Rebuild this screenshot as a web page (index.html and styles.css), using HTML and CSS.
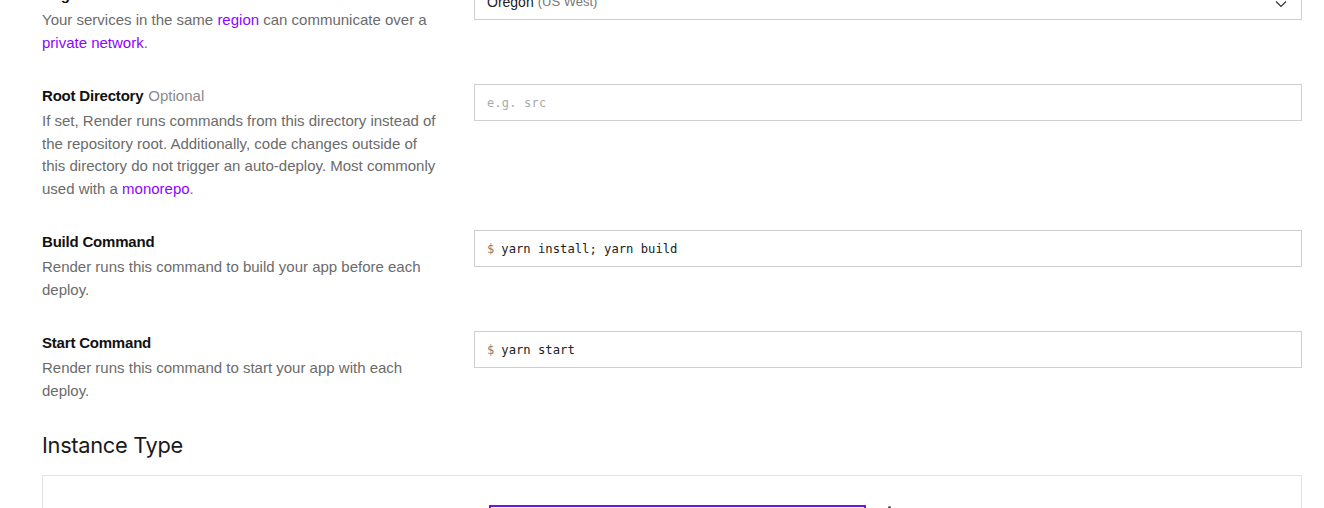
FILE: index.html
```html
<!DOCTYPE html>
<html lang="en">
<head>
<meta charset="utf-8">
<title>New Web Service</title>
<link rel="stylesheet" href="styles.css">
</head>
<body>
<main class="page">
  <section class="form">
    <div class="row">
      <div class="info">
        <div class="label">Region</div>
        <p class="desc">Your services in the same <a href="#">region</a> can communicate over a <a href="#">private network</a>.</p>
      </div>
      <div class="field">
        <div class="select">
          <span class="sel-main">Oregon</span><span class="sel-sub">(US West)</span>
          <svg class="chev" width="12" height="8" viewBox="0 0 12 8"><path d="M1 1.5 L6 6.5 L11 1.5" fill="none" stroke="#333" stroke-width="1.2"/></svg>
        </div>
      </div>
    </div>

    <div class="row">
      <div class="info">
        <div class="label">Root Directory <span class="opt">Optional</span></div>
        <p class="desc">If set, Render runs commands from this directory instead of the repository root. Additionally, code changes outside of this directory do not trigger an auto-deploy. Most commonly used with a <a href="#">monorepo</a>.</p>
      </div>
      <div class="field">
        <div class="input"><span class="ph">e.g. src</span></div>
      </div>
    </div>

    <div class="row">
      <div class="info">
        <div class="label">Build Command</div>
        <p class="desc">Render runs this command to build your app before each deploy.</p>
      </div>
      <div class="field">
        <div class="input"><span class="dollar">$</span><span class="cmd">yarn install; yarn build</span></div>
      </div>
    </div>

    <div class="row">
      <div class="info">
        <div class="label">Start Command</div>
        <p class="desc">Render runs this command to start your app with each deploy.</p>
      </div>
      <div class="field">
        <div class="input"><span class="dollar">$</span><span class="cmd">yarn start</span></div>
      </div>
    </div>
  </section>

  <h2 class="heading">Instance Type</h2>
  <section class="instances">
    <div class="plans">
      <div class="plan selected"></div>
      <div class="plan-next"><span class="dot"></span></div>
    </div>
  </section>
</main>
</body>
</html>
```
FILE: styles.css
```css
* { box-sizing: border-box; }
html, body { margin: 0; padding: 0; background: #fff; overflow: hidden; }
body {
  font-family: "Liberation Sans", Arial, sans-serif;
  color: #666;
  height: 508px;
}
.page {
  width: 1260px;
  margin-left: 42px;
  margin-top: -17px;
}
.form {
  display: flex;
  flex-direction: column;
  gap: 30px;
}
.row {
  display: grid;
  grid-template-columns: 400px 1fr;
  column-gap: 32px;
}
.label {
  font-size: 15px;
  line-height: 24px;
  font-weight: 700;
  color: #111;
  letter-spacing: -0.2px;
}
.opt {
  font-weight: 400;
  color: #8a8a8a;
  margin-left: 1px;
  letter-spacing: 0;
}
.desc {
  margin: 2px 0 0;
  font-size: 15px;
  line-height: 22.5px;
  color: #6b6b6b;
}
.desc a { color: #8a05ff; text-decoration: none; }
.select, .input {
  height: 37px;
  border: 1px solid #cfcfcf;
  display: flex;
  align-items: center;
  padding: 0 12px;
  background: #fff;
}
.select { position: relative; }
.sel-main { font-size: 14px; color: #222; }
.sel-sub { font-size: 13px; color: #777; margin-left: 4px; }
.chev { position: absolute; right: 14px; top: 16px; }
.ph {
  font-family: "DejaVu Sans Mono", monospace;
  font-size: 12px;
  color: #aaa;
  letter-spacing: 0.2px;
}
.dollar, .cmd {
  font-family: "DejaVu Sans Mono", monospace;
  font-size: 12.2px;
}
.dollar { color: #8a7a6a; margin-right: 7px; }
.cmd { color: #222; }
.heading {
  margin: 29px 0 15px;
  font-family: "Inter", "Liberation Sans", sans-serif;
  font-size: 21.8px;
  line-height: 29px;
  font-weight: 400;
  color: #1a1a1a;
  letter-spacing: -0.3px;
}
.instances {
  border: 1px solid #e3e3e3;
  border-bottom: none;
  height: 60px;
  padding: 29px 0 0 446px;
}
.plans { display: flex; gap: 22px; }
.plan {
  width: 377px;
  height: 60px;
  border: 2px solid #7a12e6;
}
.plan-next { padding-top: 1px; }
.dot {
  display: block;
  width: 3px;
  height: 3px;
  background: #555;
  border-radius: 50%;
}
```
